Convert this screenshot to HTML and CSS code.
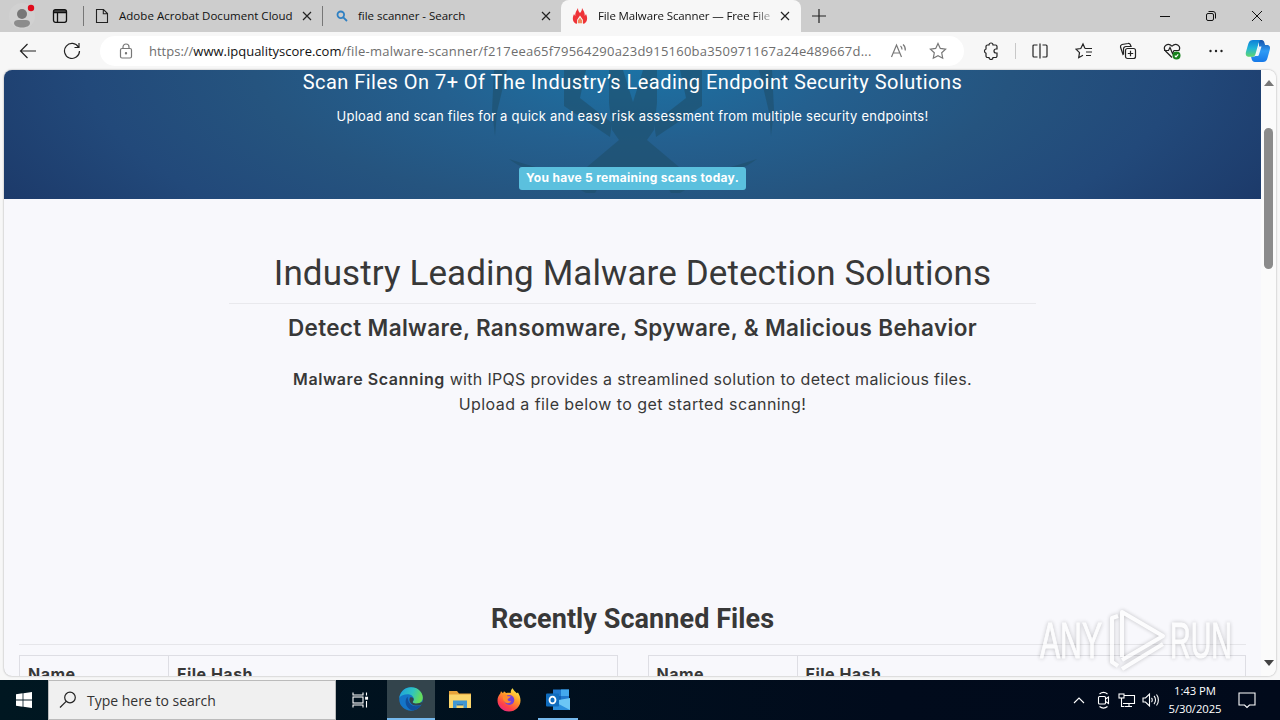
FILE: index.html
```
<!DOCTYPE html>
<html lang="en">
<head>
  <meta charset="UTF-8">
  <title>File Malware Scanner — Free File Scan</title>
  <link rel="stylesheet" href="styles.css">
</head>
<body>
  <!-- tab strip -->
  <header class="tabs">
    <div class="tabs-left">
      <svg class="profile" width="28" height="28" viewBox="0 0 28 28">
        <circle cx="14" cy="14" r="13" fill="#d1d1d1"/>
        <circle cx="14" cy="12" r="5" fill="#777"/>
        <path fill="#8c8c8c" d="M6 21c0-2 2-3 4-3h8c2 0 4 1 4 3 0 3-4 4.500-8 4.500S6 24 6 21z"/>
        <circle cx="23" cy="6" r="3.200" fill="#e00b1c"/>
      </svg>
      <svg class="workspaces" width="16" height="16" viewBox="0 0 16 16" fill="none" stroke="#111" stroke-width="1.300">
        <rect x="1.500" y="1.700" width="13" height="12.600" rx="2"/>
        <path d="M2 3h12M2 4.600h12M5.500 5v9"/>
      </svg>
    </div>
    <div class="tab tab-adobe">
      <svg width="14" height="16" viewBox="0 0 14 16" fill="none" stroke="#222" stroke-width="1.100">
        <path d="M1.500 1.500v13h11V5.500l-4-4zM8.300 1.500v4.200h4.200"/>
      </svg>
      <span class="tab-title t1">Adobe Acrobat Document Cloud</span>
      <svg class="close" width="10" height="10" viewBox="0 0 10 10"><path d="M1 1l8 8M9 1l-8 8"/></svg>
    </div>
    <div class="tab tab-search">
      <svg width="12" height="12" viewBox="0 0 12 12" fill="none" stroke="#2f80c3" stroke-width="1.800">
        <circle cx="4.800" cy="4.800" r="3.300"/><path d="M7.300 7.300l3.700 3.700"/>
      </svg>
      <span class="tab-title t2">file scanner - Search</span>
      <svg class="close" width="10" height="10" viewBox="0 0 10 10"><path d="M1 1l8 8M9 1l-8 8"/></svg>
    </div>
    <div class="tab tab-active">
      <svg width="16" height="18" viewBox="0 0 16 18">
        <path fill="#ee3338" d="M3.500 16.500C0 14 .5 10 2 7l1.200 2C3 6 4.500 3.500 6 1c0 2.500.8 3.500 2 5 1.200-1.500 2-2.500 2-5 1.500 2.500 3 5 2.800 8L14 7c1.500 3 2 7-1.500 9.500l-1.500.200V13L8 8.500 5 13v3.700z"/>
        <path fill="#f08b5c" d="M8 10.500l2.200 3v2.700H5.800v-2.700z"/>
      </svg>
      <span class="tab-title t3">File Malware Scanner — Free File</span>
      <svg class="close" width="10" height="10" viewBox="0 0 10 10"><path d="M1 1l8 8M9 1l-8 8"/></svg>
    </div>
    <svg class="new-tab" width="14" height="14" viewBox="0 0 14 14"><path d="M7 0v14M0 7h14"/></svg>
    <div class="window-buttons">
      <svg width="12" height="12" viewBox="0 0 12 12"><path d="M1 6.500h10"/></svg>
      <svg width="12" height="12" viewBox="0 0 12 12"><rect x="1.500" y="3.500" width="7" height="7" rx="1.500"/><path d="M3.500 1.500h4.500a2.500 2.500 0 0 1 2.500 2.500v4.500"/></svg>
      <svg width="12" height="12" viewBox="0 0 12 12"><path d="M1 1l10 10M11 1L1 11"/></svg>
    </div>
  </header>

  <!-- address bar -->
  <div class="toolbar">
    <svg class="back" width="18" height="16" viewBox="0 0 18 16"><path d="M8.500 1L1.500 8l7 7M1.500 8H17"/></svg>
    <svg class="reload" width="18" height="18" viewBox="0 0 18 18"><path d="M15.500 5.200A7.500 7.500 0 1 0 16.500 9M16 1v4.500h-4.500"/></svg>
    <div class="address">
      <svg class="lock" width="14" height="16" viewBox="0 0 14 16"><rect x="1.500" y="5.500" width="11" height="9.500" rx="1.500"/><path d="M4 5.500V4a3 3 0 0 1 6 0v1.500"/><circle cx="7" cy="10.200" r=".6" fill="#666"/></svg>
      <div class="url"><span class="u1">https://</span><span class="u2">www.ipqualityscore.com</span><span class="u3">/file-malware-scanner/f217eea65f79564290a23d915160ba350971167a24e489667d...</span></div>
      <svg class="read" width="18" height="16" viewBox="0 0 18 16"><path d="M1.500 14L6.500 2l5 12M3.300 10h6.500M10.500 3c1.300 1 1.500 2 1.500 3.500M13 1.500c2 1.500 2.500 3.500 2.300 6"/></svg>
      <svg class="star" width="18" height="18" viewBox="0 0 18 18"><path d="M9 1.500l2.300 4.900 5.300.7-3.900 3.700 1 5.400L9 13.600l-4.700 2.600 1-5.400L1.400 7.100l5.300-.7z"/></svg>
    </div>
    <div class="tools">
      <svg width="18" height="18" viewBox="0 0 18 18"><path d="M4 7V4.500A1.500 1.500 0 0 1 5.500 3H7a2 2 0 0 1 4 0h2.500A1.500 1.500 0 0 1 15 4.500V7h-1a2 2 0 0 0 0 4h1v3a1.500 1.500 0 0 1-1.500 1.500H11a2 2 0 0 1-4 0H5.500A1.500 1.500 0 0 1 4 14v-2.800a2.200 2.200 0 0 1 0-4.200z"/></svg>
      <span class="divider"></span>
      <svg width="18" height="18" viewBox="0 0 18 18"><path d="M6.500 3H3a1 1 0 0 0-1 1v10a1 1 0 0 0 1 1h3.500M9 1.500v15M11.500 3H15a1 1 0 0 1 1 1v10a1 1 0 0 1-1 1h-3.500"/></svg>
      <svg width="18" height="18" viewBox="0 0 18 18"><path d="M10 6.500L8 2 5.800 6.500 1 7.200l3.500 3.500-.8 5L8 13.300M10 6.500h7M11 10h6M11 13.500h5"/></svg>
      <svg width="18" height="18" viewBox="0 0 18 18"><rect x="6.500" y="6.500" width="10" height="10" rx="2"/><path d="M11.500 8.800v5.400M8.800 11.500h5.400M4 12.500L1.500 5A2.200 2.200 0 0 1 3 2.500l6-1a2 2 0 0 1 2.500 1.500l.5 1.500H7a2.500 2.500 0 0 0-2.500 2.500V12z"/></svg>
      <svg width="18" height="18" viewBox="0 0 18 18"><path d="M9 15.500L2.500 9C-1 4 5 0 9 4.200c4-4.200 10-.2 6.500 4.800M1 8.500h4.500l1.500-3 2.500 6 1.500-3H16.500"/><circle cx="13.500" cy="13.500" r="4" fill="#16811c" stroke="none"/><path stroke="#fff" d="M11.800 13.600l1.200 1.200 2.200-2.400"/></svg>
      <svg width="18" height="18" viewBox="0 0 18 18"><g fill="#222" stroke="none"><circle cx="3.500" cy="9" r="1.200"/><circle cx="9" cy="9" r="1.200"/><circle cx="14.500" cy="9" r="1.200"/></g></svg>
    </div>
    <svg class="copilot" width="26" height="24" viewBox="0 0 26 24">
      <defs>
        <linearGradient id="cpA" x1="0" y1="0" x2="0" y2="1"><stop offset="0" stop-color="#0d7fd8"/><stop offset=".5" stop-color="#21b5d8"/><stop offset="1" stop-color="#62d66c"/></linearGradient>
        <linearGradient id="cpB" x1="0" y1="0" x2="0" y2="1"><stop offset="0" stop-color="#1450a8"/><stop offset=".5" stop-color="#2f9bf5"/><stop offset="1" stop-color="#1679e8"/></linearGradient>
      </defs>
      <path fill="url(#cpB)" d="M14 1h2.500c2 0 2.600 1.400 3 3l.6 2H22c3 0 3.500 2.500 2.700 5l-2.200 8c-.8 3-2.500 4-4.500 4h-8c-2 0-3-1.500-3.500-3.500l-.5-2h3c1.500 0 2.300-1 2.800-2.500L14 8z"/>
      <path fill="url(#cpA)" d="M8 1h8c-1.500.5-2 2-2.500 3.500L10.500 15c-.5 1.700-1.500 2.800-3 2.800H4c-3 0-3.700-2.300-3-5l2.300-8C4.200 2 5.800 1 8 1z"/>
      <path fill="#fff" opacity=".9" d="M14 7.500h2.500l-2.500 8c-.3 1-.8 1.500-2 1.500H10c1-1 1.300-2 1.600-3z"/>
    </svg>
  </div>

  <!-- web page -->
  <div class="viewport">
    <main class="page">
      <section class="hero">
        <svg class="hero-art" width="290" height="129" viewBox="0 0 290 129">
          <g fill="#1e4f6b" opacity=".6">
            <path d="M6 0h13L9 42 7 66 4 40z M284 0h-13l10 42 2 24 3-26z"/>
            <path d="M76 0h22l-6 28 32 25-2 14-46-31z M214 0h-22l6 28-32 25 2 14 46-31z"/>
            <path d="M121 0h14l10 32 10-32h14v33l-3 27-7 10 38 32c19 3 40-3 72-13-22 17-51 18-77 34h-9l-13-22h-50l-13 22h-9C73 107 43 106 21 89c32 10 53 16 72 13l38-32-7-10-3-27z"/>
          </g>
        </svg>
        <h3>Scan Files On 7+ Of The Industry’s Leading Endpoint Security Solutions</h3>
        <p>Upload and scan files for a quick and easy risk assessment from multiple security endpoints!</p>
        <span class="badge">You have 5 remaining scans today.</span>
      </section>

      <section class="intro">
        <h1>Industry Leading Malware Detection Solutions</h1>
        <h2>Detect Malware, Ransomware, Spyware, &amp; Malicious Behavior</h2>
        <p class="line1"><b>Malware Scanning</b> with IPQS provides a streamlined solution to detect malicious files.</p>
        <p class="line2">Upload a file below to get started scanning!</p>
      </section>

      <section class="recent">
        <h4>Recently Scanned Files</h4>
        <div class="tables">
          <div class="file-table"><div class="th">Name</div><div class="th hash">File Hash</div></div>
          <div class="file-table"><div class="th">Name</div><div class="th hash">File Hash</div></div>
        </div>
      </section>
    </main>
    <div class="scrollbar">
      <svg width="10" height="6" viewBox="0 0 10 6"><path fill="#777" d="M5 0l5 6H0z"/></svg>
      <div class="thumb"></div>
      <svg class="down" width="10" height="6" viewBox="0 0 10 6"><path fill="#444" d="M5 6l5-6H0z"/></svg>
    </div>
  </div>

  <!-- taskbar -->
  <footer class="taskbar">
    <div class="start">
      <svg width="16" height="16" viewBox="0 0 16 16"><path fill="#fff" d="M0 2.200L6.600 1.300v6.300H0zM7.400 1.200L16 0v7.600H7.400zM0 8.400h6.600v6.300L0 13.800zM7.400 8.400H16V16l-8.600-1.200z"/></svg>
    </div>
    <div class="search">
      <svg width="18" height="18" viewBox="0 0 18 18" fill="none" stroke="#222" stroke-width="1.200"><circle cx="11" cy="6.500" r="5.300"/><path d="M7.200 10.300L1 16.500"/></svg>
      <span>Type here to search</span>
    </div>
    <div class="tasks">
      <div class="task view">
        <svg width="18" height="18" viewBox="0 0 18 18" fill="none" stroke="#fff" stroke-width="1.100"><path d="M2 1.500v2.500h10V1.500M2 16.500V14h10v2.500M15.500 1.500v3M15.500 10v6.500"/><rect x="2" y="6" width="10" height="6"/><rect x="14.700" y="6.300" width="1.800" height="1.800" fill="#fff"/></svg>
      </div>
      <div class="task current">
        <svg width="24" height="24" viewBox="0 0 24 24">
          <defs>
            <linearGradient id="edA" x1="0" y1="0" x2="1" y2=".3"><stop offset="0" stop-color="#1c9de0"/><stop offset=".6" stop-color="#2fc4c0"/><stop offset="1" stop-color="#65dc5a"/></linearGradient>
          </defs>
          <circle cx="12" cy="12" r="11.800" fill="#1475c8"/>
          <path fill="url(#edA)" d="M.3 11C1.500 4 6.500.2 12 .2c7 0 11.800 5 11.800 10.300 0 4-3 6.300-6.200 6.300-2.600 0-3.900-1-3.900-1.800 0-.7 1-1 1-2.900 0-2.600-2.500-4.800-6-4.800C5 7.300 1.500 8.500.3 11z"/>
          <path fill="#114f9c" d="M8.700 9.800c-3 2.300-3 8.500 1.300 12 1.500 1.200 3.500 1.800 5 1.500 3.500-.8 5.500-3 7-5.300-3.500 1.800-8 1.600-10.500-.7-2.200-2-2.800-5-2.800-7.500z"/>
          <path fill="#33444c" d="M11 10.500c-1.600 3 .6 7.500 5.500 8 2.500.2 5-.3 7-1.200l-.3-2.500c-3 2.500-9.500 2-9.500.2 0-.7 1-1 1-2.900 0-1-1.700-2.400-3.700-1.600z"/>
        </svg>
      </div>
      <div class="task">
        <svg width="22" height="20" viewBox="0 0 22 20">
          <path fill="#e8a33a" d="M0 1h8l2 2.500h12V8H0z"/>
          <path fill="#fbd56b" d="M0 4.500h22V18H0z"/>
          <path fill="#4096d2" d="M4 10.500h14V18h-3.500v-4h-7v4H4z"/>
          <path fill="#2b76b6" d="M7.500 14h7v1.500h-7z"/>
        </svg>
      </div>
      <div class="task">
        <svg width="24" height="24" viewBox="0 0 24 24">
          <defs><linearGradient id="ff" x1=".8" y1="0" x2=".2" y2="1"><stop offset="0" stop-color="#fff24a"/><stop offset=".4" stop-color="#ff9a27"/><stop offset=".75" stop-color="#ff4148"/><stop offset="1" stop-color="#e3258d"/></linearGradient></defs>
          <path fill="url(#ff)" d="M3.300 5.500L4 3.300l2 2 1-2 2.200 1.800c1.500-.5 3-.5 4.500 0-.2-2 .6-3.800 2-4.800 1 2.700 3 3.500 4 5l1.300-.8c1.500 2.500 2.500 5 2.500 8 0 6-5 11-11.500 11S.5 18.500.5 12.500c0-2.700 1-5 2.800-7z"/>
          <circle cx="12.300" cy="12" r="5" fill="#7542d8"/>
          <path fill="#ff8b2c" d="M6 7c2-.5 3.500 0 4.500 1.300h3.200c0 1.700-3 2-3 3-.2 1.500 1.500 2.500 3.500 1.700-1.200 3-5.500 3-7 .3C6 12 5.500 9.500 6 7z"/>
        </svg>
      </div>
      <div class="task open">
        <svg width="26" height="24" viewBox="0 0 26 24">
          <path fill="#1f78ce" d="M8 1.500h16V14H8z"/><path fill="#43a9ee" d="M16 1.500h8V8h-8z"/><path fill="#1062b4" d="M8 8h8v7H8z"/>
          <path fill="#6bc6f5" d="M8 13l17-3v12H8z"/><path fill="#2b8fdd" d="M8 13l17 9H8z"/>
          <rect x="1" y="5.500" width="13" height="13" rx="1" fill="#0f6cbe"/>
          <ellipse cx="7.500" cy="12" rx="3" ry="3.400" fill="none" stroke="#fff" stroke-width="1.800"/>
        </svg>
      </div>
    </div>
    <div class="tray">
      <svg class="chevron" width="12" height="8" viewBox="0 0 12 8"><path d="M1 7l5-5 5 5"/></svg>
      <svg class="meet" width="14" height="18" viewBox="-.5 0 14 18"><rect x="2" y="5.500" width="7" height="7.500" rx="1"/><path d="M9 8l3-2v6.500l-3-2M3 3c2.500-2 5.500-2 8 0M3 15.500c2.500 2 5.500 2 8 0"/></svg>
      <svg width="18" height="16" viewBox="0 0 18 16"><path d="M6 3.500h10.500v8H5M11 11.500v3M7 14.500h7M3.500 6v8.500h3"/><rect x="1" y="2" width="5" height="4"/></svg>
      <svg width="18" height="16" viewBox="0 0 18 16"><path d="M1 6h2.500L7.500 2v12L3.500 10H1zM9.500 6c1 1 1 3 0 4M12 4c2 2 2 6 0 8M14.500 2.500c2.500 3 2.500 8 0 11"/></svg>
      <div class="clock"><span>1:43 PM</span><span>5/30/2025</span></div>
      <svg class="notify" width="18" height="18" viewBox="0 0 18 18"><path d="M1 2h16v12h-5.500L9 16.500 6.500 14H1z"/></svg>
    </div>
  </footer>

  <!-- watermark over the page -->
  <svg class="watermark" width="206" height="72" viewBox="0 0 206 72">
    <g fill="#fff" stroke="#fff">
      <text x="6" y="53" textLength="62" lengthAdjust="spacingAndGlyphs">ANY</text>
      <text x="136" y="53" textLength="62" lengthAdjust="spacingAndGlyphs">RUN</text>
    </g>
    <g fill="none" stroke="#fff" stroke-width="4" stroke-linejoin="round">
      <path d="M84 11l-6 2v44l6 4M88 52V7l41 24-41 24M88 64l41-25"/>
    </g>
  </svg>
</body>
</html>
```
FILE: styles.css
```
* {
  box-sizing: border-box;
}
body {
  margin: 0;
  width: 1280px;
  height: 720px;
  overflow: hidden;
  display: flex;
  flex-direction: column;
  position: relative;
  font-family: "Open Sans", "Noto Sans", sans-serif;
  background: #f7f7f7;
  color: #111;
}
svg {
  display: block;
  flex-shrink: 0;
}
h1, h2, h3, h4, p {
  margin: 0;
  white-space: nowrap;
}

/* tabs */
.tabs {
  display: flex;
  height: 32px;
  background: #cdcdcd;
}
.tabs-left {
  width: 83px;
  display: flex;
  align-items: center;
  padding-left: 8px;
  gap: 16px;
}
.tab {
  display: flex;
  align-items: center;
  font-size: 11.5px;
}
.tab-adobe {
  width: 239px;
  padding: 0 10px 0 12px;
  background: linear-gradient(#777, #777) left center / 1px 20px no-repeat;
}
.tab-search {
  width: 239px;
  padding: 0 10px 0 14px;
  background: linear-gradient(#777, #777) left center / 1px 20px no-repeat;
}
.tab-active {
  width: 240px;
  padding: 0 11px;
  background: #f7f7f7;
  border-radius: 8px 8px 0 0;
}
.tab-title {
  flex: 1;
  padding-bottom: 2px;
  white-space: nowrap;
}
.t1 {
  margin: 0 8px 0 10px;
  letter-spacing: 0.03px;
}
.t2 {
  margin: 0 9px 0 10px;
  letter-spacing: -0.03px;
}
.t3 {
  margin: 0 9px 0 10px;
  letter-spacing: -0.12px;
  -webkit-mask-image: linear-gradient(to right, #000 155px, rgba(0, 0, 0, 0.2) 174px);
  mask-image: linear-gradient(to right, #000 155px, rgba(0, 0, 0, 0.2) 174px);
}
.close, .new-tab {
  fill: none;
  stroke: #222;
  stroke-width: 1.2;
}
.new-tab {
  margin: 9px 0 0 11px;
}
.window-buttons {
  margin: 10px 17px 0 auto;
  display: flex;
  gap: 34px;
}
.window-buttons svg {
  fill: none;
  stroke: #111;
}

/* toolbar */
.toolbar {
  height: 38px;
  display: flex;
  align-items: center;
  padding-left: 19px;
  background: #f7f7f7;
}
.toolbar svg {
  fill: none;
  stroke: #222;
  stroke-width: 1.2;
}
.reload {
  margin-left: 26px;
}
.address {
  width: 864px;
  height: 30px;
  margin-left: 19px;
  padding: 0 17px 0 19px;
  border-radius: 15px;
  background: #fff;
  display: flex;
  align-items: center;
}
.toolbar .address svg {
  stroke: #777;
}
.url {
  width: 723px;
  margin-left: 16px;
  font-size: 13px;
  white-space: nowrap;
  color: #6e6e6e;
}
.url .u2 {
  color: #111;
}
.url .u3 {
  letter-spacing: 0.23px;
}
.read {
  margin-left: 18px;
}
.star {
  margin-left: 21px;
}
.tools {
  display: flex;
  align-items: center;
  gap: 26px;
  margin-left: 18px;
}
.tools .divider {
  width: 1px;
  height: 16px;
  margin: 0 -11px;
  background: #c8c8c8;
}
.toolbar .copilot {
  stroke: none;
  margin-left: 20px;
}

/* page */
.viewport {
  height: 606px;
  margin: 0 4px 4px;
  display: flex;
  overflow: hidden;
  border-radius: 8px;
  background: #f8f8fc;
  box-shadow: 0 0 2px #999;
}
.page {
  width: 1257px;
  color: #383838;
  font-family: Inter, sans-serif;
  text-align: center;
}
.hero {
  height: 129px;
  position: relative;
  color: #fff;
  background: radial-gradient(ellipse 730px 280px at 50% -6px, #1b73a6 0%, #24608f 28%, #25547f 52%, #22497a 75%, #1c3969 100%);
}
.hero-art {
  position: absolute;
  left: 484px;
  top: 0;
}
.hero h3, .hero p, .badge {
  position: relative;
}
.hero h3 {
  font: 400 20px/24px Roboto, sans-serif;
  letter-spacing: 0.47px;
}
.hero p {
  padding-top: 12px;
  font-size: 13px;
  line-height: 20px;
  letter-spacing: 0.24px;
}
.badge {
  display: inline-block;
  width: 227px;
  height: 23px;
  margin-top: 41px;
  border-radius: 3px;
  background: #5bc0de;
  font-size: 12px;
  line-height: 22px;
  font-weight: 700;
  letter-spacing: 0.3px;
  white-space: nowrap;
}
.intro {
  height: 391px;
  width: 807px;
  margin: 0 auto;
  padding-top: 50px;
}
.intro h1 {
  height: 55px;
  border-bottom: 1px solid #e9e9ed;
  font: 400 35px/50px Roboto, sans-serif;
  letter-spacing: 0.1px;
}
.intro h2 {
  margin-top: 9px;
  font-size: 22.5px;
  font-weight: 600;
  line-height: 30px;
  letter-spacing: 0.33px;
}
.intro p {
  font-size: 16px;
  line-height: 25px;
}
.intro .line1 {
  margin-top: 24px;
  letter-spacing: 0.31px;
}
.intro .line2 {
  letter-spacing: 0.43px;
}
.intro b {
  font-weight: 600;
  letter-spacing: 0.56px;
}
.recent {
  padding: 0 15px;
}
.recent h4 {
  height: 55px;
  padding-top: 9px;
  border-bottom: 1px solid #e6e6ea;
  font: 700 27px/40px Roboto, sans-serif;
  letter-spacing: 0.07px;
}
.tables {
  display: flex;
  gap: 30px;
  margin-top: 10px;
}
.file-table {
  flex: 1;
  height: 40px;
  display: flex;
  border: 1px solid #dedee4;
}
.th {
  width: 148px;
  padding: 6px 8px;
  text-align: left;
  font-weight: 700;
  font-size: 16px;
  line-height: 24px;
  letter-spacing: 0.5px;
}
.th.hash {
  flex: 1;
  border-left: 1px solid #dedee4;
}
.scrollbar {
  width: 15px;
  background: #fbfbfb;
  display: flex;
  flex-direction: column;
  align-items: center;
  padding: 10px 0;
}
.thumb {
  width: 9px;
  height: 141px;
  margin-top: 42px;
  border-radius: 5px;
  background: #8b8b8b;
}
.down {
  margin-top: auto;
}

/* taskbar */
.taskbar {
  height: 40px;
  display: flex;
  background: linear-gradient(to right, #001721, #010b1c 70%, #010a1b);
}
.start {
  width: 48px;
  display: flex;
  align-items: center;
  justify-content: center;
}
.search {
  width: 288px;
  display: flex;
  align-items: center;
  gap: 10px;
  padding-left: 10px;
  border: 1px solid #bbb;
  background: #f0f0f0;
  font-size: 14px;
  color: #333;
}
.tasks {
  display: flex;
  gap: 1px;
}
.task {
  width: 48px;
  display: flex;
  align-items: center;
  justify-content: center;
}
.task.view {
  width: 50px;
  padding-right: 2px;
}
.task.current {
  background: #33444c;
  border-bottom: 2px solid #76b9ed;
}
.task.open {
  background: linear-gradient(#76b9ed, #76b9ed) center bottom / 40px 2px no-repeat;
}
.tray {
  margin-left: auto;
  display: flex;
  align-items: center;
  padding-right: 24px;
  gap: 6px;
  color: #fff;
}
.tray svg {
  fill: none;
  stroke: #fff;
  stroke-width: 1.1;
}
.tray .chevron {
  margin-right: 5px;
}
.tray .meet {
  margin-right: 2px;
}
.clock {
  width: 54px;
  margin-left: 2px;
  display: flex;
  flex-direction: column;
  align-items: center;
  font-size: 11.3px;
  line-height: 18px;
  letter-spacing: -0.05px;
  white-space: nowrap;
}
.notify {
  margin-left: 10px;
}

.watermark {
  position: absolute;
  left: 1034px;
  top: 605px;
  font: 400 50px "Liberation Sans", sans-serif;
  filter: drop-shadow(0 0 2px rgba(0, 0, 0, 0.35));
  opacity: 0.65;
}
```
